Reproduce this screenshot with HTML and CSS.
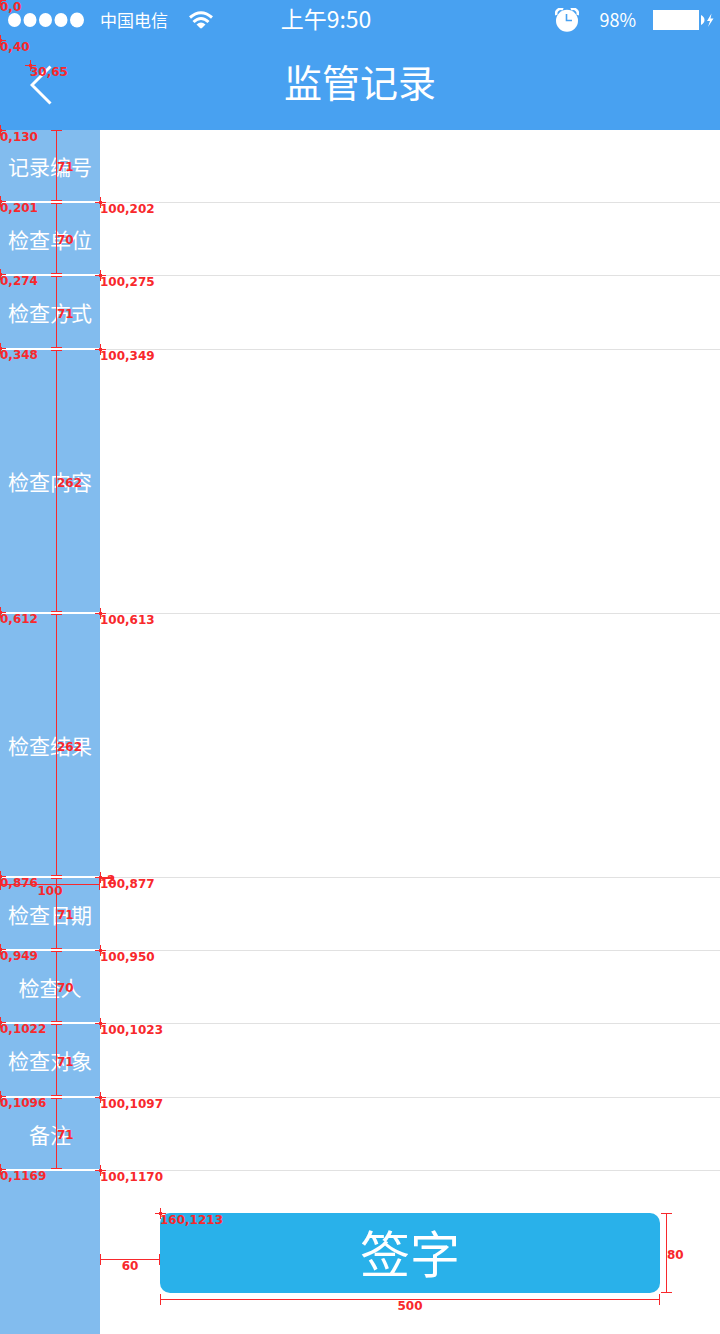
FILE: index.html
```html
<!DOCTYPE html>
<html lang="zh-CN">
<head>
<meta charset="utf-8">
<meta name="viewport" content="width=device-width, initial-scale=1">
<title>监管记录</title>
<link rel="stylesheet" href="styles.css">
</head>
<body>
<div class="page">
  <header class="header">
    <div class="status">
      <div class="status-left">
        <svg class="signal" viewBox="0 0 77 16" aria-hidden="true"><g fill="#fff"><ellipse cx="6.500" cy="8" rx="6.500" ry="7"/><ellipse cx="22" cy="8" rx="6.500" ry="7"/><ellipse cx="37.500" cy="8" rx="6.500" ry="7"/><ellipse cx="53" cy="8" rx="6.500" ry="7"/><ellipse cx="69" cy="8" rx="7" ry="7.500"/></g></svg>
        <span class="carrier">中国电信</span>
        <svg class="wifi" viewBox="0 0 24 18" aria-hidden="true"><g fill="none" stroke="#fff" stroke-width="3"><path d="M1 6.500Q12-3 23 6.500"/><path d="M4.500 11Q12 4 19.500 11"/></g><path d="M7.500 13.500Q12 9.500 16.500 13.500L13 17Q12 17.800 11 17Z" fill="#fff"/></svg>
      </div>
      <span class="time">上午9:50</span>
      <div class="status-right">
        <svg class="alarm" viewBox="0 0 24 24" aria-hidden="true"><path d="M1.500 7A4.500 4.500 0 0 1 8 1.500M16 1.500A4.500 4.500 0 0 1 22.500 7" fill="none" stroke="#fff" stroke-width="2.600"/><circle cx="12" cy="12.800" r="11" fill="#fff"/><path d="M11.500 6V12.500H17" fill="none" stroke="#48a1f1" stroke-width="1.600"/></svg>
        <span class="percent">98%</span>
        <svg class="battery" viewBox="0 0 62 22" aria-hidden="true"><path d="M1 1H47V21H1ZM49 6Q52.500 8 52.500 11Q52.500 14 49 16ZM59.500 4.500L55 12H58L56 18L61.500 9.500H58.500Z" fill="#fff"/></svg>
      </div>
    </div>
    <nav class="titlebar">
      <button class="back" type="button" aria-label="返回"><svg viewBox="0 0 22 40" aria-hidden="true"><path d="M20.500 1.500L2 20L20.500 38.500" fill="none" stroke="#fff" stroke-width="3"/></svg></button>
      <h1>监管记录</h1>
    </nav>
    <span class="pin pin-origin">0,0</span>
    <span class="pin pin-nav">0,40</span>
    <span class="pin pin-back">30,65</span>
  </header>

  <form class="form">
    <div class="row">
      <label for="f1">记录编号</label><input id="f1" type="text">
      <span class="pin pin-top">0,130</span><span class="pin pin-left">0,201</span><span class="pin pin-field">100,202</span><span class="vdim">71</span>
    </div>
    <div class="row">
      <label for="f2">检查单位</label><input id="f2" type="text">
      <span class="pin pin-left">0,274</span><span class="pin pin-field">100,275</span><span class="vdim">70</span>
    </div>
    <div class="row row-wide">
      <label for="f3">检查方式</label><input id="f3" type="text">
      <span class="pin pin-left">0,348</span><span class="pin pin-field">100,349</span><span class="vdim">71</span>
    </div>
    <div class="row row-tall">
      <label for="f4">检查内容</label><textarea id="f4"></textarea>
      <span class="pin pin-left">0,612</span><span class="pin pin-field">100,613</span><span class="vdim">262</span>
    </div>
    <div class="row row-tall">
      <label for="f5">检查结果</label><textarea id="f5"></textarea>
      <span class="pin pin-left">0,876</span><span class="pin pin-field">100,877</span><span class="vdim">262</span>
    </div>
    <div class="row">
      <label for="f6">检查日期</label><input id="f6" type="text">
      <span class="pin pin-left">0,949</span><span class="pin pin-field">100,950</span><span class="vdim">71</span>
      <span class="hdim hdim-label">100</span><span class="line-dim">2</span>
    </div>
    <div class="row">
      <label for="f7">检查人</label><input id="f7" type="text">
      <span class="pin pin-left">0,1022</span><span class="pin pin-field">100,1023</span><span class="vdim">70</span>
    </div>
    <div class="row row-wide">
      <label for="f8">检查对象</label><input id="f8" type="text">
      <span class="pin pin-left">0,1096</span><span class="pin pin-field">100,1097</span><span class="vdim">71</span>
    </div>
    <div class="row">
      <label for="f9">备注</label><input id="f9" type="text">
      <span class="pin pin-left">0,1169</span><span class="pin pin-field">100,1170</span><span class="vdim">71</span>
    </div>
    <div class="actions">
      <div class="sign-box">
        <button class="sign" type="button">签字</button>
        <span class="pin pin-top">160,1213</span>
        <span class="hdim hdim-gap">60</span>
        <span class="hdim hdim-button">500</span>
        <span class="vdim vdim-button">80</span>
      </div>
    </div>
  </form>
</div>
</body>
</html>
```
FILE: styles.css
```css
* {
  box-sizing: border-box;
}

body {
  margin: 0;
  background: #fff;
  color: #fff;
  font-family: "Noto Sans CJK SC", sans-serif;
}

.page {
  display: flex;
  flex-direction: column;
  min-height: 100vh;
  overflow: hidden;
}

.header {
  position: relative;
  background: #48a1f1;
}

.status {
  display: grid;
  grid-template-columns: 1fr auto 1fr;
  align-items: center;
  height: 40px;
  padding: 0 6px 0 8px;
}

.status-left,
.status-right {
  display: flex;
  align-items: center;
}

.status-right {
  justify-content: flex-end;
}

.signal {
  width: 77px;
  height: 16px;
  margin-right: 15px;
}

.carrier {
  margin-right: 21px;
  font-size: 17px;
  line-height: 24px;
}

.wifi {
  width: 24px;
  height: 18px;
}

.time {
  padding: 0 70px 4px 0;
  font-size: 23px;
  line-height: 32px;
}

.alarm {
  width: 24px;
  height: 24px;
  margin-right: 20px;
}

.percent {
  margin-right: 16px;
  padding-bottom: 2px;
  font-size: 18px;
  line-height: 24px;
}

.battery {
  width: 62px;
  height: 22px;
}

.titlebar {
  display: grid;
  grid-template-columns: 60px 1fr 60px;
  align-items: center;
  height: 90px;
}

.back {
  display: flex;
  justify-content: flex-end;
  padding: 0 8px 0 0;
  border: 0;
  background: none;
}

.back svg {
  width: 22px;
  height: 40px;
}

h1 {
  margin: 0;
  padding-bottom: 8px;
  font-size: 38px;
  font-weight: 400;
  line-height: 56px;
  text-align: center;
}

.form {
  display: flex;
  flex: 1;
  flex-direction: column;
  background: linear-gradient(to right, #82bcee 100px, #fff 100px);
}

.row {
  position: relative;
  display: grid;
  grid-template-columns: 100px 1fr;
  min-height: 73px;
}

.row-wide {
  min-height: 74px;
}

.row-tall {
  min-height: 264px;
}

.row label {
  display: flex;
  align-items: center;
  justify-content: center;
  border-bottom: 2px solid #fff;
  font-size: 21px;
  line-height: 30px;
}

.row input,
.row textarea {
  width: 100%;
  min-width: 0;
  padding: 8px 16px;
  border: 0;
  border-bottom: 1px solid #e1e1e1;
  outline: 0;
  background: none;
  font: inherit;
  color: #333;
  resize: none;
}

.actions {
  padding: 42px 60px 41px 160px;
}

.sign-box {
  position: relative;
}

.sign {
  display: block;
  width: 100%;
  height: 80px;
  padding: 0 0 4px;
  border: 0;
  border-radius: 10px;
  background: #29b1ea;
  color: #fff;
  font: inherit;
  font-size: 50px;
  line-height: 76px;
}

/* Measurement overlay */
.pin,
.vdim,
.hdim,
.line-dim {
  position: absolute;
  z-index: 1;
  color: #f8282c;
  font: bold 12px/14px "DejaVu Sans", sans-serif;
  white-space: nowrap;
  pointer-events: none;
}

.pin::before {
  content: "";
  position: absolute;
  top: -5px;
  left: -5px;
  width: 11px;
  height: 11px;
  background:
    radial-gradient(circle, #f8282c 2px, transparent 2px),
    linear-gradient(#f8282c, #f8282c) center / 11px 1px no-repeat,
    linear-gradient(#f8282c, #f8282c) center / 1px 11px no-repeat;
}

.pin-origin,
.pin-top {
  top: 0;
  left: 0;
}

.pin-nav {
  top: 40px;
  left: 0;
}

.pin-back {
  top: 65px;
  left: 30px;
}

.pin-left {
  bottom: -12px;
  left: 0;
}

.pin-field {
  bottom: -13px;
  left: 100px;
}

.vdim {
  top: 0;
  bottom: 2px;
  left: 51px;
  display: flex;
  align-items: center;
  padding: 3px 0 0 6px;
  background:
    linear-gradient(#f8282c, #f8282c) 0 0 / 11px 1px no-repeat,
    linear-gradient(#f8282c, #f8282c) 0 100% / 11px 1px no-repeat,
    linear-gradient(#f8282c, #f8282c) 5px 0 / 1px 100% no-repeat;
}

.vdim-button {
  top: 0;
  bottom: 0;
  left: calc(100% + 1px);
}

.hdim {
  padding-top: 5px;
  text-align: center;
  background:
    linear-gradient(#f8282c, #f8282c) 0 0 / 1px 11px no-repeat,
    linear-gradient(#f8282c, #f8282c) 100% 0 / 1px 11px no-repeat,
    linear-gradient(#f8282c, #f8282c) 0 5px / 100% 1px no-repeat;
}

.hdim-label {
  top: 1px;
  left: 0;
  width: 100px;
}

.hdim-gap {
  top: 41px;
  right: 100%;
  width: 60px;
}

.hdim-button {
  top: 81px;
  left: 0;
  width: 100%;
}

.line-dim {
  top: -5px;
  left: 100px;
  padding-left: 7px;
  background: linear-gradient(#f8282c, #f8282c) 0 4px / 14px 2px no-repeat;
}
```
